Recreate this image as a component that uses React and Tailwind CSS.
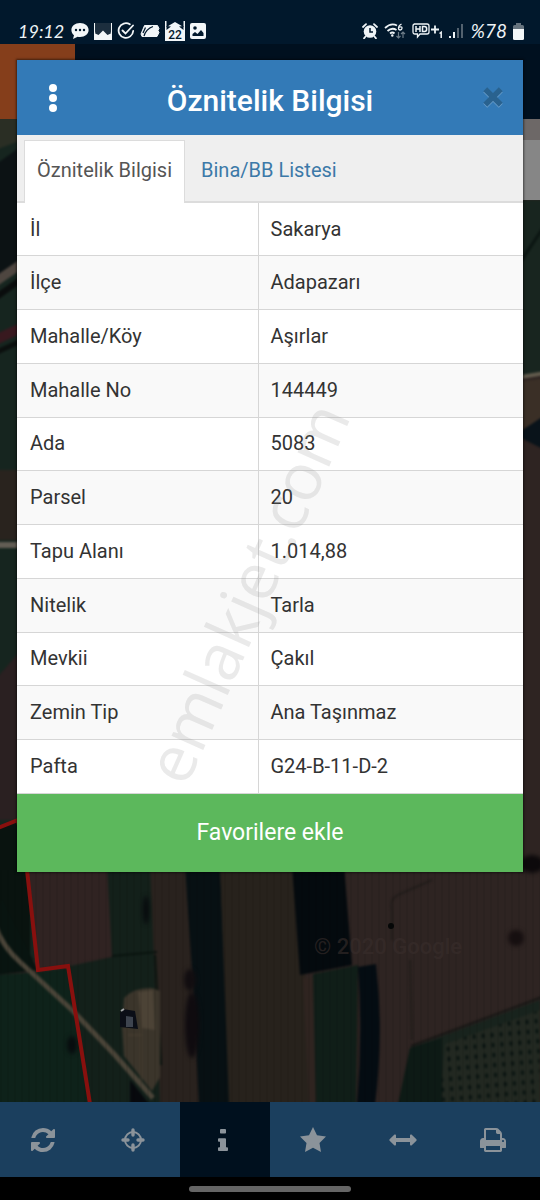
import React from "react";

const rows = [
  ["İl", "Sakarya"],
  ["İlçe", "Adapazarı"],
  ["Mahalle/Köy", "Aşırlar"],
  ["Mahalle No", "144449"],
  ["Ada", "5083"],
  ["Parsel", "20"],
  ["Tapu Alanı", "1.014,88"],
  ["Nitelik", "Tarla"],
  ["Mevkii", "Çakıl"],
  ["Zemin Tip", "Ana Taşınmaz"],
  ["Pafta", "G24-B-11-D-2"],
];

function Bubble() {
  return (
    <svg viewBox="0 0 18 18" className="h-[18px] w-[18px]" aria-hidden="true">
      <path fill="#f2f6f8" d="M9 1C4 1 .4 3.9 .4 8c0 2.200 1 4 2.600 5.200L2 17l4.600-2.300c.8.200 1.600.200 2.400.200 5 0 8.600-2.800 8.600-6.900S14 1 9 1z" />
      <g fill="#01182c">
        <circle cx="5" cy="8" r="1.200" />
        <circle cx="9" cy="8" r="1.200" />
        <circle cx="13" cy="8" r="1.200" />
      </g>
    </svg>
  );
}

function Envelope() {
  return (
    <svg viewBox="0 0 18 20" className="h-5 w-[18px]" aria-hidden="true">
      <path fill="#f2f6f8" d="M0 2h1.200v9L9 8l7.800 3V2H18v17H0z" />
      <path fill="#1c2e3e" d="M1.200 2h15.600v10.500L13.500 14 9 9.500 4.500 14 1.200 12.500z" />
    </svg>
  );
}

function CheckCircle() {
  return (
    <svg viewBox="0 0 18 18" className="h-[18px] w-[18px]" fill="none" stroke="#f2f6f8" strokeWidth="1.800" strokeLinecap="round" aria-hidden="true">
      <path d="M12.800 2.300A7.300 7.300 0 1 0 16.200 9M5.500 8.500l3 3L16 3.500" />
    </svg>
  );
}

function Leaf() {
  return (
    <svg viewBox="0 0 20 16" className="h-4 w-5" aria-hidden="true">
      <path d="M4.500 2.500h13l1.500 3-1 2 1 2-2 4H2L1 11z" fill="#f2f6f8" stroke="#f2f6f8" strokeWidth="1" strokeLinejoin="round" />
      <path d="M4 13Q6 6 13 3.500M3 10l2.500-5.500" fill="none" stroke="#01182c" strokeWidth="1.300" />
    </svg>
  );
}

function CalendarMail() {
  return (
    <svg viewBox="0 0 20 20" className="h-5 w-5" aria-hidden="true">
      <path fill="#f2f6f8" d="M0 0h1.500v6L10 1l8.500 5V0H20v20H0z" />
      <path fill="#01182c" d="M1.500 5v4L6 5.500zM18.500 5v4L14 5.500z" />
      <text x="10" y="18" textAnchor="middle" fontFamily="Roboto, sans-serif" fontSize="12" fontWeight="500" fill="#01182c">22</text>
    </svg>
  );
}

function Picture() {
  return (
    <svg viewBox="0 0 16 16" className="h-4 w-4" aria-hidden="true">
      <rect width="16" height="16" rx="2" fill="#f2f6f8" />
      <circle cx="5" cy="5" r="1.800" fill="#01182c" />
      <path fill="#01182c" d="M2.500 13v-2l2.500-2 2.500 2 3.500-4 2.500 3v3z" />
    </svg>
  );
}

function Alarm() {
  return (
    <svg viewBox="0 0 16 16" className="h-4 w-4" aria-hidden="true">
      <circle cx="8" cy="8.500" r="6.300" fill="#eef3f6" />
      <path d="M1 4l3-2.800M15 4l-3-2.800M3.500 13.500L2 15.300M12.500 13.500l1.500 1.800" stroke="#eef3f6" strokeWidth="1.800" strokeLinecap="round" />
      <path d="M8 5v4h3" fill="none" stroke="#01182c" strokeWidth="1.500" />
    </svg>
  );
}

function Wifi() {
  return (
    <svg viewBox="0 0 22 18" className="h-[18px] w-[22px]" fill="none" aria-hidden="true">
      <path d="M1 6Q7 .5 13 3.500M3.500 9Q8 5 12.500 8M6 11.500q2.500-2 4.500 0" stroke="#eef3f6" strokeWidth="1.800" />
      <circle cx="8.300" cy="13.500" r="1.200" fill="#eef3f6" />
      <path d="M17.500 2Q14.500 3.500 14.500 6q0 2 1.700 2T18 6.300t-1.700-1.500-1.800 1.500" stroke="#eef3f6" strokeWidth="1.300" />
      <path d="M14.500 10v6M12.500 14l2 2 2-2M19 16v-6M17 12l2-2 2 2" stroke="#6c7b87" strokeWidth="1.200" />
    </svg>
  );
}

function HdPlus() {
  return (
    <svg viewBox="0 0 31 18" className="h-[18px] w-[31px]" fill="none" stroke="#eef3f6" aria-hidden="true">
      <path d="M2 2h13q2 0 2 2v6q0 2-2 2H8l-2.500 3v-3H3q-2 0-2-2V4q0-2 2-2" strokeWidth="1.300" />
      <path d="M4 4v6M8 4v6M4 7h4M10.500 4.500v5h2q2.200 0 2.200-2.500t-2.200-2.500z" strokeWidth="1.500" />
      <path d="M19 7.500h8M23 3.500v8" strokeWidth="1.800" />
      <path d="M27.500 11.500l1.700-1.200V16" strokeWidth="1.500" />
    </svg>
  );
}

function Signal() {
  return (
    <svg viewBox="0 0 14 16" className="h-4 w-3.5" aria-hidden="true">
      <path fill="#eef3f6" d="M0 13h2v2H0zM4 9h2v6H4z" />
      <path fill="#53626f" d="M8 5h2v10H8zM12 1h2v14h-2z" />
    </svg>
  );
}

function Battery() {
  return (
    <svg viewBox="0 0 11 17" className="h-[17px] w-[11px]" aria-hidden="true">
      <path fill="#66737e" d="M3 0h5v2h1.500Q11 2 11 3.500V8H0V3.500Q0 2 1.500 2H3z" />
      <path fill="#f2f6f8" d="M0 6h11v9.500Q11 17 9.500 17h-8Q0 17 0 15.500z" />
    </svg>
  );
}

function StatusBar() {
  return (
    <header className="flex h-11 items-end justify-between bg-[#01182c] pr-4 pb-[3px] pl-[18px] text-[#eef3f6]">
      <div className="flex items-center gap-[5px]">
        <span className="w-12 font-['Lato',sans-serif] text-[18px] leading-5 italic">19:12</span>
        <Bubble />
        <Envelope />
        <CheckCircle />
        <Leaf />
        <CalendarMail />
        <Picture />
      </div>
      <div className="flex items-center gap-1.5">
        <Alarm />
        <Wifi />
        <HdPlus />
        <Signal />
        <span className="pl-0.5 font-['Lato',sans-serif] text-[19px] leading-5 italic">%78</span>
        <Battery />
      </div>
    </header>
  );
}

function FieldMap() {
  return (
    <svg viewBox="0 119 540 983" preserveAspectRatio="xMidYMax slice" className="h-full w-full" aria-hidden="true">
      <defs>
        <pattern id="furrow" width="7" height="40" patternUnits="userSpaceOnUse">
          <path d="M1 0v40" stroke="#000" strokeOpacity=".06" strokeWidth="2" />
        </pattern>
        <pattern id="trees" width="9" height="10" patternUnits="userSpaceOnUse" patternTransform="rotate(-5)">
          <ellipse cx="4" cy="4" rx="1.500" ry="2.500" fill="#07120f" />
        </pattern>
        <filter id="soft" x="-5%" y="-5%" width="110%" height="110%" colorInterpolationFilters="sRGB">
          <feGaussianBlur stdDeviation="1.100" />
        </filter>
        <filter id="softer" x="-50%" y="-50%" width="200%" height="200%" colorInterpolationFilters="sRGB">
          <feGaussianBlur stdDeviation="2" />
        </filter>
      </defs>
      <rect y="119" width="540" height="983" fill="#2e2422" />
      <g filter="url(#soft)">
        <path d="M-5 110h60v850H-5z" fill="#16251f" />
        <path d="M-5 110h40v25L-5 150z" fill="#2a2e24" />
        <path d="M-5 165L30 140v115L-5 280z" fill="#0c1214" />
        <path d="M-5 282L30 258" stroke="#4e4640" strokeWidth="9" />
        <path d="M-5 298L30 273" stroke="#0a0d0d" strokeWidth="6" />
        <path d="M-5 340L30 324" stroke="#38191f" strokeWidth="10" />
        <path d="M-5 353L30 337" stroke="#0b0f0e" strokeWidth="5" />
        <path d="M-5 470h30v70H-5z" fill="#29231e" />
        <path d="M-5 545h35" stroke="#625d54" strokeWidth="6" />
        <path d="M-5 680L30 640v180H-5z" fill="#2a2021" />
        <path d="M-5 828l35-10v142H-5z" fill="#09130f" />
        <path d="M515 200h30v175h-30z" fill="#18251f" />
        <path d="M515 270l30-45" stroke="#0b1512" strokeWidth="3" />
        <path d="M515 378l30-5" stroke="#625b4d" strokeWidth="4" />
        <path d="M515 382l30-4v45l-30 8z" fill="#3a2f26" />
        <path d="M515 435l30-20v35z" fill="#09131a" />
        <path d="M26 865h84l4 92-76 12z" fill="#302322" />
        <path d="M107 865h45l12 240H80L66 967l46-10z" fill="#13201a" />
        <path d="M-5 975l43-3 30-4 22 137H-5z" fill="#0e221a" />
        <path d="M0 895l38 75-43 5z" fill="#081410" />
        <path d="M150 865h36l13 240h-39z" fill="#29221e" />
        <path d="M185 865h35l10 240h-31l-6-120z" fill="#071013" />
        <path d="M220 865h75l22 240h-88z" fill="#27221c" />
        <path d="M303 978l10 0 5 127h-9z" fill="#2f2420" />
        <path d="M292 865h52l8 100-52 10z" fill="#040a0e" />
        <path d="M313 974l45-9-2 140h-40z" fill="#101e18" />
        <path d="M358 967l18-3q8 70-1 141h-18q6-70 1-138z" fill="#040c12" />
        <path d="M410 1048l130-48v105H398z" fill="#18231d" />
        <path d="M445 1044l95-34v95H440z" fill="#222821" />
        <path d="M445 1044l95-34v95H440z" fill="url(#trees)" />
        <path d="M410 1048l32-10v67h-44z" fill="#0d1a15" />
        <path d="M411 1046l131-49" stroke="#171715" strokeWidth="2" />
        <path d="M392 940v-30q-3-12 8-16l32-14M410 960l2 80" stroke="#221d1b" strokeWidth="2" fill="none" />
        <path d="M112 956l45-4M155 955l6 110" stroke="#0a140f" strokeWidth="2" fill="none" />
        <path d="M122 1028l2-30q10-11 28-10l8 3v86l-8 14-28-35z" fill="#3b352b" />
        <path d="M138 992l15-2 2 40-13-2z" fill="#4c4336" />
        <path d="M141 1005v80M128 1035h14" stroke="#4c4235" strokeWidth="1" />
        <path d="M-5 925Q2 946 20 962l52 48 42 44 39 44" fill="none" stroke="#4a4438" strokeWidth="5" />
        <path d="M130 1080l20 25h-20z" fill="#07090d" />
      </g>
      <rect x="-5" y="870" width="550" height="235" fill="url(#furrow)" />
      <path d="M120 1013l3-4 12 2 3 18-18-2z" fill="#0b0e17" />
      <path d="M126 1016l7 1v10h-7z" fill="#3e444f" />
      <path d="M121 1011l3-2" stroke="#a3a5a7" strokeWidth="2" />
      <g filter="url(#softer)">
        <ellipse cx="190" cy="980" rx="6" ry="11" fill="#110d10" />
        <ellipse cx="192" cy="1025" rx="7" ry="33" fill="#0f0b0f" />
        <ellipse cx="146" cy="910" rx="3" ry="14" fill="#070a0d" />
        <ellipse cx="516" cy="938" rx="8" ry="8" fill="#160f10" />
        <ellipse cx="532" cy="864" rx="12" ry="9" fill="#0c090b" />
        <ellipse cx="72" cy="1045" rx="5" ry="9" fill="#070c0e" />
      </g>
      <circle cx="391" cy="926" r="3" fill="#050707" />
      <path d="M-2 828l20-8 9 50 11 100 30-4 22 138" fill="none" stroke="#88100e" strokeWidth="4" />
      <text x="314" y="954" fontFamily="Roboto, sans-serif" fontSize="22" fontWeight="500" fill="#392e2c" fillOpacity=".6">© 2020 Google</text>
    </svg>
  );
}

function Modal() {
  return (
    <section role="dialog" aria-labelledby="dialog-title" className="relative mx-[17px] bg-white shadow-[0_0_2px_1px_rgba(0,0,0,0.5)]">
      <div className="flex h-[75px] items-center justify-between bg-[#337ab7] px-5">
        <button type="button" aria-label="Menü" className="flex h-10 w-8 items-center justify-center">
          <svg viewBox="0 0 8 28" className="h-7 w-2 shrink-0" fill="#fff" aria-hidden="true">
            <circle cx="4" cy="4" r="4" />
            <circle cx="4" cy="14" r="4" />
            <circle cx="4" cy="24" r="4" />
          </svg>
        </button>
        <h1 id="dialog-title" className="pt-1.5 text-[30px] leading-9 font-medium text-white">Öznitelik Bilgisi</h1>
        <button type="button" aria-label="Kapat" className="flex h-10 w-8 items-center justify-end">
          <svg viewBox="0 0 20 21" className="h-[21px] w-5 shrink-0" strokeWidth="5.500" strokeLinecap="square" fill="none" aria-hidden="true">
            <path d="M4.200 5.200l11.600 11.600M15.800 5.200L4.200 16.800" stroke="#6ea1cd" />
            <path d="M4.200 4.200l11.600 11.600M15.800 4.200L4.200 15.800" stroke="#29628f" />
          </svg>
        </button>
      </div>
      <div role="tablist" className="flex h-[68px] border-b-2 border-[#dcdcdc] bg-[#efefef] pt-[5px] pl-[7px]">
        <button type="button" role="tab" aria-selected="true" className="-mb-0.5 border border-b-0 border-[#dcdcdc] bg-white px-3 pb-1 text-[20px] text-[#555]">
          Öznitelik Bilgisi
        </button>
        <button type="button" role="tab" aria-selected="false" className="px-4 pb-0.5 text-[20px] text-[#3c79a8]">
          Bina/BB Listesi
        </button>
      </div>
      <div className="relative">
        <table className="h-[591px] w-full table-fixed border-collapse text-[20px] leading-6 text-[#333]">
          <tbody>
            {rows.map(([label, value]) => (
              <tr key={label} className="border-b border-[#d6d6d6] even:bg-[#f9f9f9]">
                <th scope="row" className="w-[241px] border-r border-[#d6d6d6] pb-px pl-[13px] text-left font-normal">{label}</th>
                <td className="pb-px pl-3">{value}</td>
              </tr>
            ))}
          </tbody>
        </table>
        <div className="pointer-events-none absolute inset-0 flex items-center justify-center pt-[188px] pr-12">
          <span className="-rotate-66 font-['Open_Sans',sans-serif] text-[65px] leading-none whitespace-nowrap text-[#888]/18">emlakjet.com</span>
        </div>
      </div>
      <button type="button" className="block h-[78px] w-full bg-[#5cb85c] text-[23px] text-white">Favorilere ekle</button>
    </section>
  );
}

const tools = [
  {
    name: "Yenile",
    icon: (
      <svg viewBox="0 0 1536 1536" className="h-6 w-6" fill="currentColor" aria-hidden="true">
        <path d="M1511 928q0 5-1 7-64 268-268 434.500T764 1536q-146 0-282.500-55T238 1324l-129 129q-19 19-45 19t-45-19-19-45V960q0-26 19-45t45-19h448q26 0 45 19t19 45-19 45l-137 137q71 66 161 102t187 36q134 0 250-65t186-179q11-17 53-117 8-23 30-23h192q13 0 22.500 9.500t9.500 22.500zm25-800v448q0 26-19 45t-45 19h-448q-26 0-45-19t-19-45 19-45l138-138Q969 256 768 256q-134 0-250 65T332 500q-11 17-53 117-8 23-30 23H50q-13 0-22.500-9.500T18 608v-7q65-268 270-434.500T768 0q146 0 284 55.500T1297 212l130-129q19-19 45-19t45 19 19 45z" />
      </svg>
    ),
  },
  {
    name: "Konum",
    icon: (
      <svg viewBox="0 0 24 24" className="h-6 w-6" fill="none" stroke="currentColor" aria-hidden="true">
        <circle cx="12" cy="12" r="8" strokeWidth="2" />
        <path d="M12 2v5M12 17v5M2 12h5M17 12h5" strokeWidth="3.400" strokeLinecap="round" />
      </svg>
    ),
  },
  {
    name: "Bilgi",
    icon: (
      <svg viewBox="0 0 640 1536" className="h-[22px] w-2.5" preserveAspectRatio="none" fill="currentColor" aria-hidden="true">
        <path d="M640 1344v128q0 26-19 45t-45 19H64q-26 0-45-19t-19-45v-128q0-26 19-45t45-19h64V896H64q-26 0-45-19t-19-45V704q0-26 19-45t45-19h384q26 0 45 19t19 45v576h64q26 0 45 19t19 45zM512 64v192q0 26-19 45t-45 19H192q-26 0-45-19t-19-45V64q0-26 19-45T192 0h256q26 0 45 19t19 45z" />
      </svg>
    ),
  },
  {
    name: "Favoriler",
    icon: (
      <svg viewBox="0 0 26 25" className="h-[25px] w-[26px]" fill="currentColor" aria-hidden="true">
        <path d="M13 0l4 8.300 9 1.300-6.500 6.300L21 25l-8-4.300L5 25l1.500-9.100L0 9.600l9-1.300z" />
      </svg>
    ),
  },
  {
    name: "Ölç",
    icon: (
      <svg viewBox="0 0 28 12" className="h-3 w-7" fill="currentColor" aria-hidden="true">
        <path d="M.6 6.800Q0 6 .6 5.200L5.500.6Q7 0 7 1.500V4h14V1.500Q21 0 22.500.6l4.900 4.600q.6.800 0 1.600l-4.900 4.600Q21 12 21 10.500V8H7v2.500Q7 12 5.500 11.400z" />
      </svg>
    ),
  },
  {
    name: "Yazdır",
    icon: (
      <svg viewBox="0 128 1664 1536" className="h-6 w-[26px]" fill="currentColor" aria-hidden="true">
        <path d="M384 1536h896v-256H384v256zm0-640h896V512h-160q-40 0-68-28t-28-68V256H384v640zm1152 64q0-26-19-45t-45-19-45 19-19 45 19 45 45 19 45-19 19-45zm128 0v416q0 13-9.500 22.500t-22.500 9.500h-224v160q0 40-28 68t-68 28H352q-40 0-68-28t-28-68v-160H32q-13 0-22.500-9.500T0 1376V960q0-79 56.500-135.500T192 768h64V224q0-40 28-68t68-28h672q40 0 88 20t76 48l152 152q28 28 48 76t20 88v256h64q79 0 135.500 56.500T1664 960z" />
      </svg>
    ),
  },
];

export default function App() {
  return (
    <div className="flex min-h-screen flex-col bg-black font-['Roboto',sans-serif]">
      <StatusBar />
      <main className="relative flex-1 pt-4 pb-10">
        <div className="absolute inset-0 flex flex-col overflow-hidden">
          <div className="h-[75px] shrink-0 bg-[#00101f]">
            <div className="h-full w-[75px] bg-[#853e1b]" />
          </div>
          <div className="relative min-h-0 flex-1">
            <FieldMap />
            <div className="absolute top-0 right-0 h-[81px] w-10 border-t-[21px] border-[#6d6867] bg-[#868686]" />
          </div>
        </div>
        <Modal />
      </main>
      <nav className="grid h-[75px] grid-cols-6">
        {tools.map(({ name, icon }) => (
          <button
            key={name}
            type="button"
            aria-label={name}
            aria-pressed={name === "Bilgi"}
            className="flex items-center justify-center bg-[#1b3f5e] pr-1 text-[#8b939a] aria-pressed:bg-[#00101e]"
          >
            {icon}
          </button>
        ))}
      </nav>
      <div className="flex h-[23px] items-center justify-center">
        <div className="h-1.5 w-[30%] rounded-full bg-[#656565]" />
      </div>
    </div>
  );
}
